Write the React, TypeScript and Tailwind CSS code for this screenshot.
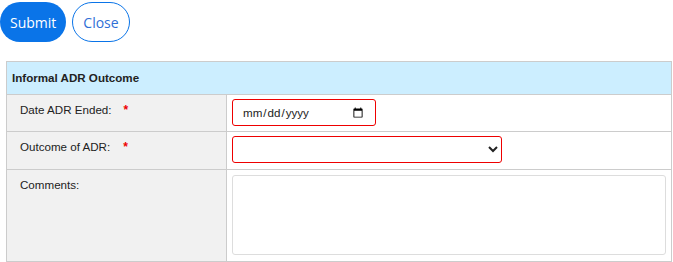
import { useState } from 'react';

// Informal ADR outcome form
export default function App() {
  const [date, setDate] = useState('');
  const [outcome, setOutcome] = useState('');
  const [comments, setComments] = useState('');

  return (
    <div className="w-[673px] h-[262px] bg-white font-['Liberation_Sans',Arial,sans-serif]">
      <div className="flex gap-[6px] pt-[2px]">
        <button className="h-10 px-[10px] rounded-full bg-[#0a74e8] text-white text-[14px] font-['Open_Sans',sans-serif]">
          Submit
        </button>
        <button className="h-10 px-[10px] rounded-full border border-[#0a74e8] bg-white text-[#2f6fd6] text-[14px] font-['Open_Sans',sans-serif]">
          Close
        </button>
      </div>

      <table className="ml-[6px] mt-[19px] w-[666px] border-collapse text-[11.6px] text-[#222]">
        <thead>
          <tr>
            <th
              colSpan={2}
              className="h-[33px] border border-[#cccccc] bg-[#cceeff] px-[5px] text-left font-bold"
            >
              Informal ADR Outcome
            </th>
          </tr>
        </thead>
        <tbody>
          <tr>
            <td className="w-[222px] h-[37px] border border-[#cccccc] bg-[#f1f1f1] pl-[13px] pt-[6px] align-top">
              Date ADR Ended:<span className="ml-[12px] text-[#ee0000] font-bold text-[12px]">*</span>
            </td>
            <td className="border border-[#cccccc] px-[5px] pt-[4px] pb-[5px] align-top">
              <input
                type="date"
                value={date}
                onChange={(e) => setDate(e.target.value)}
                className="w-[144px] h-[27px] border border-[#ee0000] rounded-[3px] px-[9px] text-[11.6px] text-[#222]"
              />
            </td>
          </tr>
          <tr>
            <td className="h-[38px] border border-[#cccccc] bg-[#f1f1f1] pl-[13px] pt-[6px] align-top">
              Outcome of ADR:<span className="ml-[13px] text-[#ee0000] font-bold text-[12px]">*</span>
            </td>
            <td className="border border-[#cccccc] px-[5px] py-[4px] align-top">
              <select
                value={outcome}
                onChange={(e) => setOutcome(e.target.value)}
                className="w-[270px] h-[27px] border border-[#ee0000] rounded-[3px] bg-white text-[12px]"
              >
                <option value=""></option>
                <option value="resolved">Resolved</option>
                <option value="unresolved">Unresolved</option>
              </select>
            </td>
          </tr>
          <tr>
            <td className="h-[92px] border border-[#cccccc] bg-[#f1f1f1] pl-[13px] pt-[6px] align-top">
              Comments:
            </td>
            <td className="border border-[#cccccc] px-[5px] py-[5px] align-top">
              <textarea
                value={comments}
                onChange={(e) => setComments(e.target.value)}
                className="block w-[434px] h-[80px] border border-[#dddddd] rounded-[3px] resize-none"
              />
            </td>
          </tr>
        </tbody>
      </table>
    </div>
  );
}
